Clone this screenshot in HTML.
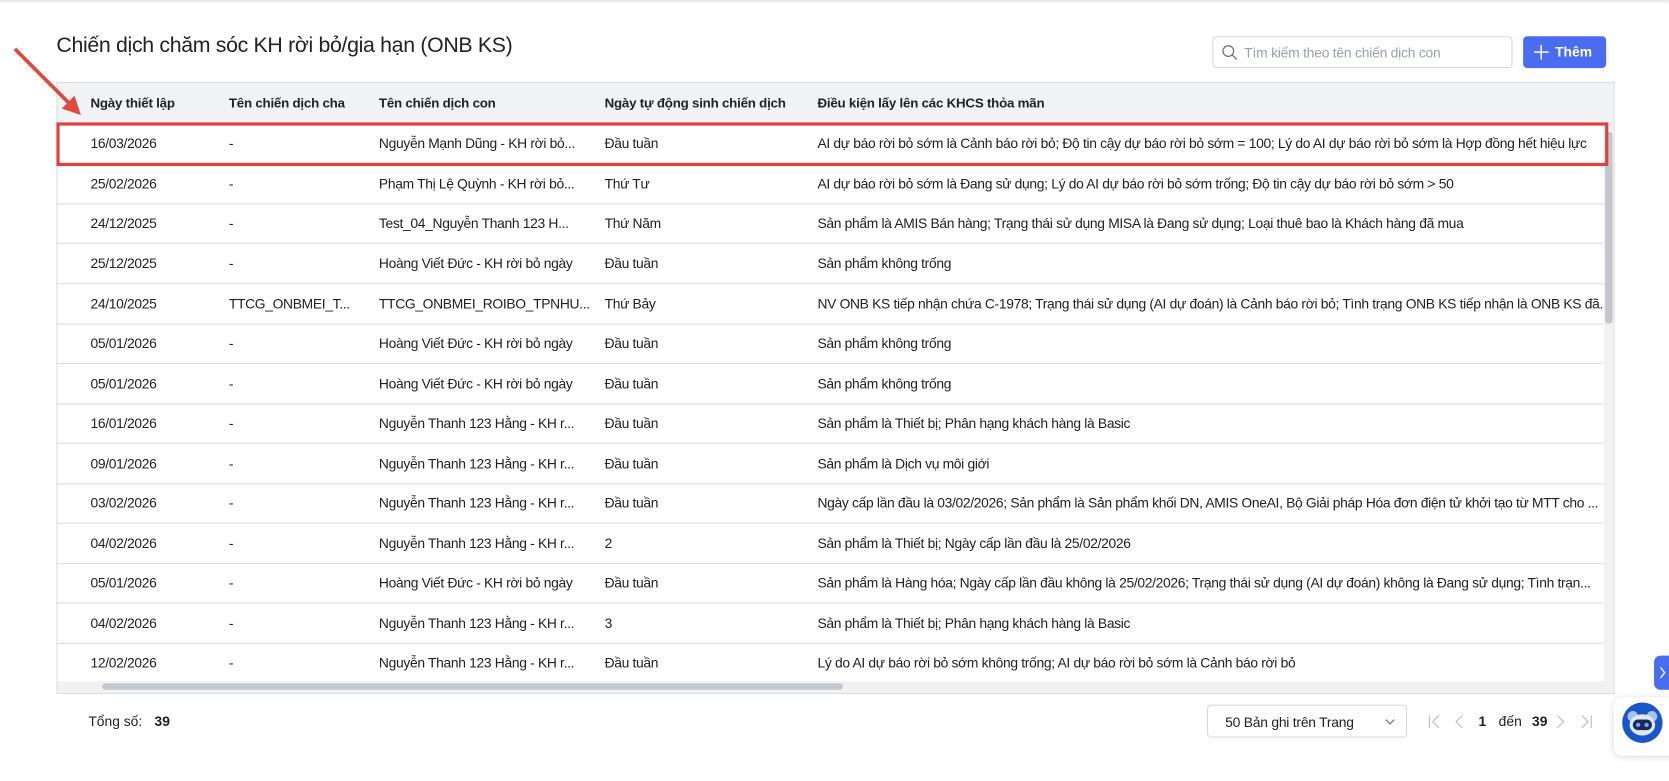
<!DOCTYPE html>
<html><head><meta charset="utf-8"><style>
*{box-sizing:border-box;margin:0;padding:0}
html,body{width:1669px;height:781px;overflow:hidden;background:#fff}
#w{width:1568px;height:734px;position:relative;transform:scale(1.0644);transform-origin:0 0;font-family:"Liberation Sans",Roboto,sans-serif;color:#212121;font-size:13px}
.topbar{position:absolute;left:0;top:0;width:1568px;height:4px;background:linear-gradient(#e4e4e4,#fff)}
.title{position:absolute;left:53px;top:32px;font-size:20px;color:#222;letter-spacing:-0.3px}
.search{position:absolute;left:1139px;top:34px;width:282px;height:30px;border:1px solid #d5d7dc;border-radius:4px;color:#9a9fab;font-size:13px;padding:7px 0 0 29px;letter-spacing:-0.2px}
.add{position:absolute;left:1431px;top:34px;width:78px;height:30px;background:#4a6cf0;border-radius:4px;color:#fff;font-weight:bold;font-size:13px;padding:7px 0 0 30px}
.tbl{position:absolute;left:53px;top:77px;width:1464px;height:575px;border:1px solid #dcdde1;overflow:hidden}
.hd{position:absolute;left:0;top:0;width:1462px;height:38px;background:#f1f2f4;border-bottom:1px solid #dcdde1}
.c{position:absolute;white-space:nowrap;letter-spacing:-0.3px}
.hd .c{top:12px;font-weight:bold;font-size:12.5px;color:#222;letter-spacing:-0.2px}
.row{position:absolute;left:0;width:1452px;height:38px;border-bottom:1px solid #dcdde1}
.row .c{top:11px}
.vs{position:absolute;left:1453px;top:38px;width:9px;height:524px;background:#f1f1f1}
.vs i{position:absolute;left:1px;top:8px;width:7px;height:180px;background:#c4c7cc;border-radius:3px}
.hs{position:absolute;left:0;top:562px;width:1462px;height:11px;background:#f1f1f1}
.hs i{position:absolute;left:42px;top:2px;width:696px;height:6px;background:#c4c7cc;border-radius:3px}
.red{position:absolute;left:53px;top:115px;width:1458px;height:41px;border:3px solid #e04040}
.foot{position:absolute;top:670px;font-size:13px}
.sel{position:absolute;left:1134px;top:662px;width:188px;height:31px;border:1px solid #d5d7dc;border-radius:4px;padding:8px 0 0 16px;font-size:13px;letter-spacing:-0.2px}
</style></head><body><div id="w">
<div class="topbar"></div>
<div class="title">Chiến dịch chăm sóc KH rời bỏ/gia hạn (ONB KS)</div>
<div class="search"><svg style="position:absolute;left:8px;top:7px" width="15" height="15"><circle cx="6" cy="6" r="5" fill="none" stroke="#6b7080" stroke-width="1.2"/><line x1="9.5" y1="9.5" x2="14" y2="14" stroke="#6b7080" stroke-width="1.2"/></svg>Tìm kiếm theo tên chiến dịch con</div>
<div class="add"><svg style="position:absolute;left:10px;top:8px" width="14" height="14"><path d="M7 0V14M0 7H14" stroke="#fff" stroke-width="1.4"/></svg>Thêm</div>
<div class="tbl">
<div class="hd"><span class="c" style="left:31px">Ngày thiết lập</span><span class="c" style="left:161px">Tên chiến dịch cha</span><span class="c" style="left:302px">Tên chiến dịch con</span><span class="c" style="left:514px">Ngày tự động sinh chiến dịch</span><span class="c" style="left:714px">Điều kiện lấy lên các KHCS thỏa mãn</span></div>
<div class="row" style="top:38px"><span class="c" style="left:31px">16/03/2026</span><span class="c" style="left:161px">-</span><span class="c" style="left:302px">Nguyễn Mạnh Dũng - KH rời bỏ...</span><span class="c" style="left:514px">Đầu tuần</span><span class="c" style="left:714px">AI dự báo rời bỏ sớm là Cảnh báo rời bỏ; Độ tin cậy dự báo rời bỏ sớm = 100; Lý do AI dự báo rời bỏ sớm là Hợp đồng hết hiệu lực</span></div>
<div class="row" style="top:76px"><span class="c" style="left:31px">25/02/2026</span><span class="c" style="left:161px">-</span><span class="c" style="left:302px">Phạm Thị Lệ Quỳnh - KH rời bỏ...</span><span class="c" style="left:514px">Thứ Tư</span><span class="c" style="left:714px">AI dự báo rời bỏ sớm là Đang sử dụng; Lý do AI dự báo rời bỏ sớm trống; Độ tin cậy dự báo rời bỏ sớm &gt; 50</span></div>
<div class="row" style="top:113px"><span class="c" style="left:31px">24/12/2025</span><span class="c" style="left:161px">-</span><span class="c" style="left:302px">Test_04_Nguyễn Thanh 123 H...</span><span class="c" style="left:514px">Thứ Năm</span><span class="c" style="left:714px">Sản phẩm là AMIS Bán hàng; Trạng thái sử dụng MISA là Đang sử dụng; Loại thuê bao là Khách hàng đã mua</span></div>
<div class="row" style="top:151px"><span class="c" style="left:31px">25/12/2025</span><span class="c" style="left:161px">-</span><span class="c" style="left:302px">Hoàng Viết Đức - KH rời bỏ ngày</span><span class="c" style="left:514px">Đầu tuần</span><span class="c" style="left:714px">Sản phẩm không trống</span></div>
<div class="row" style="top:189px"><span class="c" style="left:31px">24/10/2025</span><span class="c" style="left:161px">TTCG_ONBMEI_T...</span><span class="c" style="left:302px">TTCG_ONBMEI_ROIBO_TPNHU...</span><span class="c" style="left:514px">Thứ Bảy</span><span class="c" style="left:714px">NV ONB KS tiếp nhận chứa C-1978; Trạng thái sử dụng (AI dự đoán) là Cảnh báo rời bỏ; Tình trạng ONB KS tiếp nhận là ONB KS đã...</span></div>
<div class="row" style="top:226px"><span class="c" style="left:31px">05/01/2026</span><span class="c" style="left:161px">-</span><span class="c" style="left:302px">Hoàng Viết Đức - KH rời bỏ ngày</span><span class="c" style="left:514px">Đầu tuần</span><span class="c" style="left:714px">Sản phẩm không trống</span></div>
<div class="row" style="top:264px"><span class="c" style="left:31px">05/01/2026</span><span class="c" style="left:161px">-</span><span class="c" style="left:302px">Hoàng Viết Đức - KH rời bỏ ngày</span><span class="c" style="left:514px">Đầu tuần</span><span class="c" style="left:714px">Sản phẩm không trống</span></div>
<div class="row" style="top:301px"><span class="c" style="left:31px">16/01/2026</span><span class="c" style="left:161px">-</span><span class="c" style="left:302px">Nguyễn Thanh 123 Hằng - KH r...</span><span class="c" style="left:514px">Đầu tuần</span><span class="c" style="left:714px">Sản phẩm là Thiết bị; Phân hạng khách hàng là Basic</span></div>
<div class="row" style="top:339px"><span class="c" style="left:31px">09/01/2026</span><span class="c" style="left:161px">-</span><span class="c" style="left:302px">Nguyễn Thanh 123 Hằng - KH r...</span><span class="c" style="left:514px">Đầu tuần</span><span class="c" style="left:714px">Sản phẩm là Dịch vụ môi giới</span></div>
<div class="row" style="top:376px"><span class="c" style="left:31px">03/02/2026</span><span class="c" style="left:161px">-</span><span class="c" style="left:302px">Nguyễn Thanh 123 Hằng - KH r...</span><span class="c" style="left:514px">Đầu tuần</span><span class="c" style="left:714px">Ngày cấp lần đầu là 03/02/2026; Sản phẩm là Sản phẩm khối DN, AMIS OneAI, Bộ Giải pháp Hóa đơn điện tử khởi tạo từ MTT cho ...</span></div>
<div class="row" style="top:414px"><span class="c" style="left:31px">04/02/2026</span><span class="c" style="left:161px">-</span><span class="c" style="left:302px">Nguyễn Thanh 123 Hằng - KH r...</span><span class="c" style="left:514px">2</span><span class="c" style="left:714px">Sản phẩm là Thiết bị; Ngày cấp lần đầu là 25/02/2026</span></div>
<div class="row" style="top:451px"><span class="c" style="left:31px">05/01/2026</span><span class="c" style="left:161px">-</span><span class="c" style="left:302px">Hoàng Viết Đức - KH rời bỏ ngày</span><span class="c" style="left:514px">Đầu tuần</span><span class="c" style="left:714px">Sản phẩm là Hàng hóa; Ngày cấp lần đầu không là 25/02/2026; Trạng thái sử dụng (AI dự đoán) không là Đang sử dụng; Tình trạn...</span></div>
<div class="row" style="top:489px"><span class="c" style="left:31px">04/02/2026</span><span class="c" style="left:161px">-</span><span class="c" style="left:302px">Nguyễn Thanh 123 Hằng - KH r...</span><span class="c" style="left:514px">3</span><span class="c" style="left:714px">Sản phẩm là Thiết bị; Phân hạng khách hàng là Basic</span></div>
<div class="row" style="top:526px;border-bottom:none"><span class="c" style="left:31px">12/02/2026</span><span class="c" style="left:161px">-</span><span class="c" style="left:302px">Nguyễn Thanh 123 Hằng - KH r...</span><span class="c" style="left:514px">Đầu tuần</span><span class="c" style="left:714px">Lý do AI dự báo rời bỏ sớm không trống; AI dự báo rời bỏ sớm là Cảnh báo rời bỏ</span></div>
<div class="vs"><i></i></div>
<div class="hs"><i></i></div>
</div>
<div class="red"></div>
<svg style="position:absolute;left:10px;top:42px" width="72" height="72"><line x1="4" y1="4" x2="56" y2="56" stroke="#e04a3d" stroke-width="3.5"/><polygon points="66,66 48,60 60,48" fill="#e04a3d"/></svg>
<div class="foot" style="left:83px">Tổng số: <b style="margin-left:8px">39</b></div>
<div class="sel">50 Bản ghi trên Trang<svg style="position:absolute;right:10px;top:11px" width="10" height="8"><path d="M1 2L5 6L9 2" fill="none" stroke="#777" stroke-width="1.2"/></svg></div>
<svg style="position:absolute;left:1340px;top:670px" width="160" height="16"><path d="M3 2V14M12 2L6 8L12 14" fill="none" stroke="#c0c3c8" stroke-width="1.2"/><path d="M34 2L28 8L34 14" fill="none" stroke="#c0c3c8" stroke-width="1.2"/><path d="M123 2L129 8L123 14" fill="none" stroke="#c0c3c8" stroke-width="1.2"/><path d="M146 2L152 8L146 14M155 2V14" fill="none" stroke="#c0c3c8" stroke-width="1.2"/></svg>
<div class="foot" style="left:1389px"><b>1</b></div>
<div class="foot" style="left:1408px">đến <b style="margin-left:6px">39</b></div>
<div style="position:absolute;left:1554px;top:616px;width:20px;height:32px;background:#4a6cf0;border-radius:6px 0 0 6px"><svg style="position:absolute;left:4px;top:10px" width="8" height="12"><path d="M2 1L6 6L2 11" fill="none" stroke="#fff" stroke-width="1.2"/></svg></div>
<div style="position:absolute;left:1516px;top:655px;width:60px;height:55px;background:#fff;border-radius:8px;box-shadow:0 1px 6px rgba(0,0,0,.15)"></div>
<svg style="position:absolute;left:1524px;top:660px" width="38" height="38"><circle cx="19" cy="19" r="19" fill="#1a56c8"/><circle cx="10" cy="13" r="5" fill="#a8c4ee"/><circle cx="28" cy="13" r="5" fill="#a8c4ee"/><ellipse cx="19" cy="21" rx="12" ry="10" fill="#dde8fa"/><rect x="10" y="16" width="18" height="10" rx="5" fill="#1b2a55"/><circle cx="15" cy="21" r="2" fill="#6fa8ff"/><circle cx="23" cy="21" r="2" fill="#6fa8ff"/></svg>
</div></body></html>
